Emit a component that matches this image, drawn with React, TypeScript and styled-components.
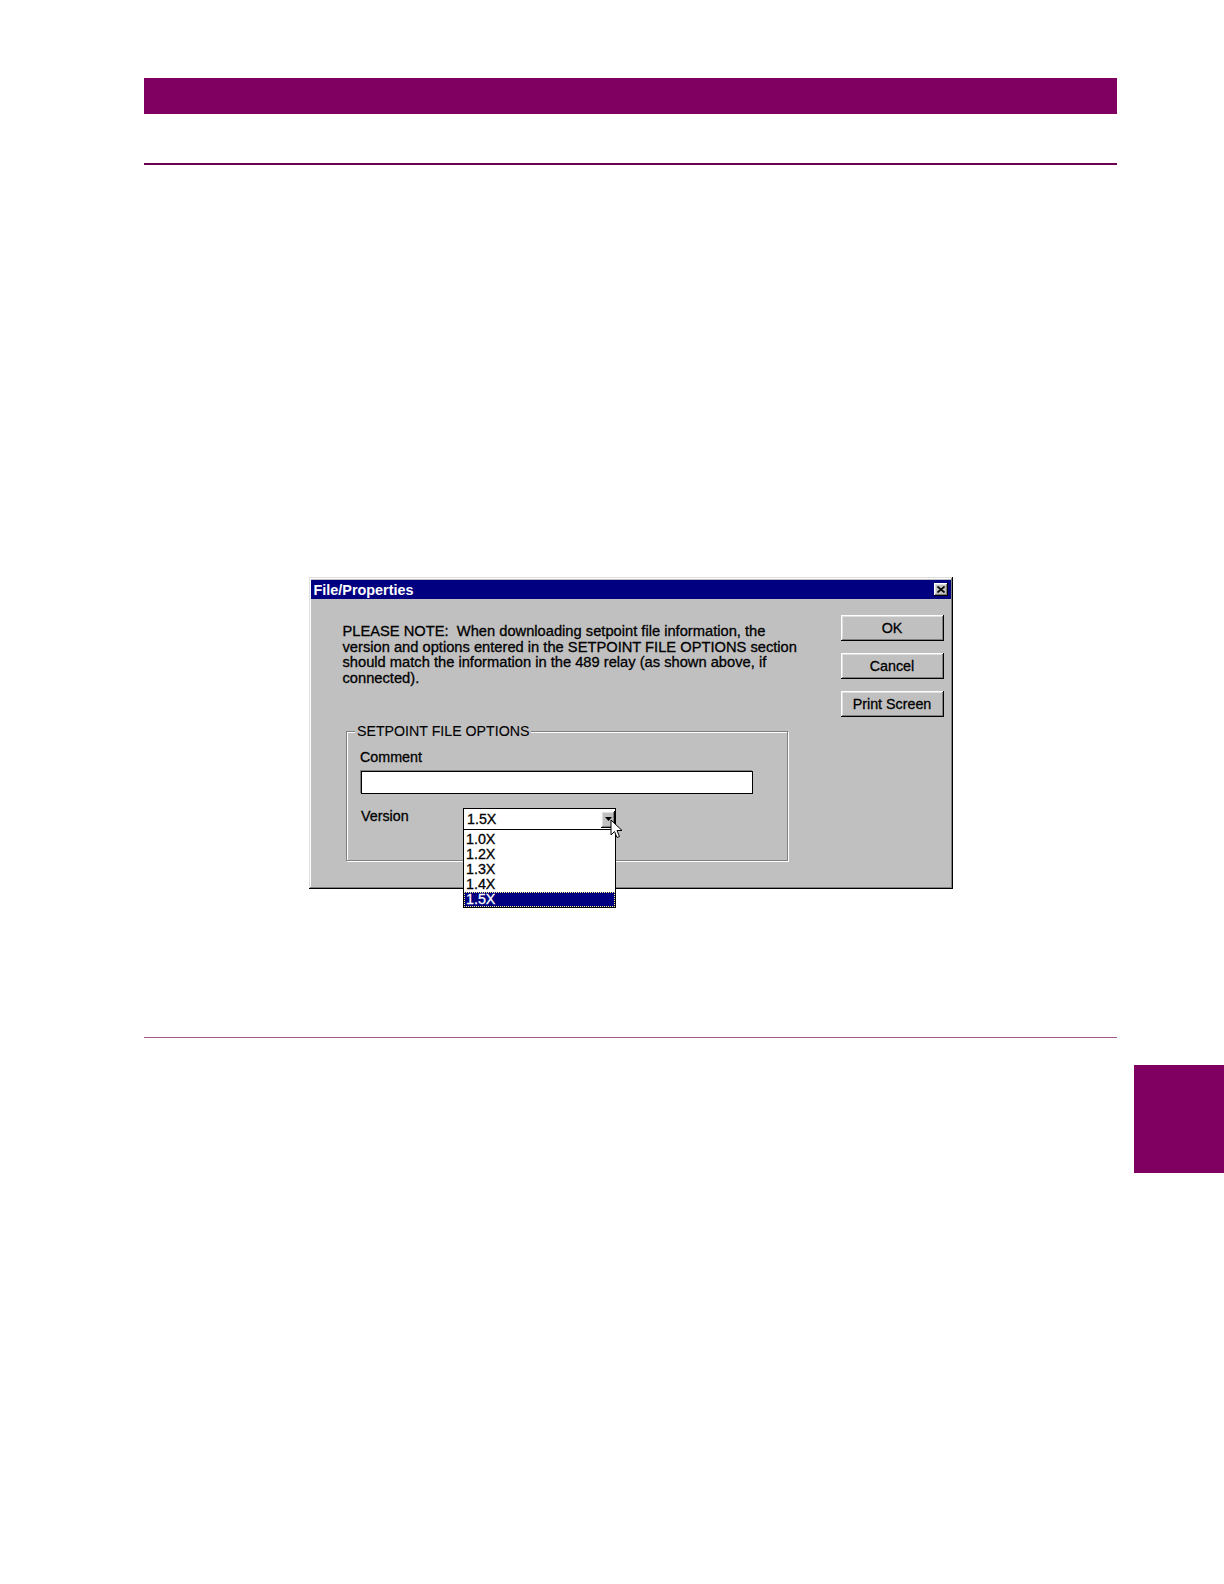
import React from "react";
import styled, { createGlobalStyle } from "styled-components";

const PURPLE = "#800062";
const FONT = `"Liberation Sans", Arial, sans-serif`;

const Global = createGlobalStyle`
  html, body { margin: 0; padding: 0; background: #ffffff; }
  body { font-family: ${FONT}; }
`;

const Page = styled.div`
  width: 1224px;
  min-height: 1584px;
  padding-top: 78px;
  box-sizing: border-box;
  display: flex;
  flex-direction: column;
  background: #fff;
`;

const Content = styled.div`
  margin: 0 107px 0 144px;
  display: flex;
  flex-direction: column;
`;

const HeaderBar = styled.div`
  height: 36px;
  background: ${PURPLE};
`;

const Rule = styled.div<{ $top: number; $h: number; $color: string }>`
  margin-top: ${(p) => p.$top}px;
  height: ${(p) => p.$h}px;
  background: ${(p) => p.$color};
`;

const DialogSlot = styled.div`
  margin-top: 412px;
  display: flex;
  justify-content: center;
`;

const raised = `
  box-shadow: inset -1px -1px 0 #000, inset 1px 1px 0 #ffffff,
    inset -2px -2px 0 #808080, inset 2px 2px 0 #dfdfdf;
`;

const heavy = `
  -webkit-text-stroke: 0.3px #000;
`;

const Window = styled.div`
  width: 644px;
  height: 312px;
  box-sizing: border-box;
  background: #c0c0c0;
  padding: 2px;
  box-shadow: inset -1px -1px 0 #000, inset 1px 1px 0 #dfdfdf,
    inset -2px -2px 0 #808080, inset 2px 2px 0 #fff;
  display: flex;
  flex-direction: column;
  position: relative;
  z-index: 1;
  font-family: ${FONT};
  color: #000;
`;

const TitleBar = styled.div`
  height: 19px;
  margin-top: 1px;
  background: #000080;
  display: flex;
  align-items: center;
  justify-content: space-between;
  padding: 0 3px 0 3px;
`;

const Title = styled.span`
  color: #fff;
  font-weight: bold;
  font-size: 14.4px;
  line-height: 19px;
  margin-top: 1px;
`;

const CloseBox = styled.div`
  width: 14px;
  height: 13px;
  background: #c0c0c0;
  ${raised}
  display: flex;
  align-items: center;
  justify-content: center;
`;

const Body = styled.div`
  flex: 1;
  display: flex;
  padding: 16px 7px 0 32px;
`;

const Main = styled.div`
  flex: 1;
  padding-top: 9px;
  display: flex;
  flex-direction: column;
  align-items: flex-start;
`;

const Note = styled.div`
  font-size: 14.7px;
  line-height: 15.5px;
  white-space: pre;
  ${heavy}
`;

const NoteLine = styled.span`
  display: block;
`;

const GroupBox = styled.div`
  margin: 45px 0 0 3.5px;
  width: 442px;
  box-sizing: border-box;
  border: 1px solid #808080;
  box-shadow: inset 1px 1px 0 #fff, 1px 1px 0 #fff;
  padding: 0 0 30px 14px;
  display: flex;
  flex-direction: column;
  align-items: flex-start;
`;

const Legend = styled.span`
  margin: -8.5px 0 0 -6px;
  padding: 0 2px;
  background: #c0c0c0;
  font-size: 14.2px;
  line-height: 15px;
  -webkit-text-stroke: 0.1px #000;
`;

const FieldLabel = styled.span<{ $width?: number }>`
  font-size: 14.3px;
  line-height: 15px;
  width: ${(p) => (p.$width ? `${p.$width}px` : "auto")};
  ${heavy}
`;

const CommentLabel = styled(FieldLabel)`
  margin: 11px 0 0 -1px;
`;

const TextBox = styled.div`
  margin-top: 6px;
  width: 392px;
  height: 23px;
  box-sizing: border-box;
  background: #fff;
  border: 1px solid #000;
  box-shadow: -1px -1px 0 #808080;
`;

const VersionRow = styled.div`
  margin-top: 14px;
  display: flex;
  align-items: flex-start;
`;

const VersionLabel = styled(FieldLabel)`
  margin-top: 1.5px;
`;

const Combo = styled.div`
  position: relative;
  width: 153px;
  height: 22px;
  box-sizing: border-box;
  border: 1px solid #000;
  background: #fff;
  display: flex;
  align-items: center;
  justify-content: space-between;
  padding-left: 3px;
`;

const ComboText = styled.span`
  font-size: 14.3px;
  line-height: 15px;
  margin-top: 1px;
  ${heavy}
`;

const DropButton = styled.div`
  width: 14px;
  height: 17px;
  margin: 1px 0 0 0;
  background: #c0c0c0;
  ${raised}
  display: flex;
  align-items: center;
  justify-content: center;
`;

const DropList = styled.div`
  position: absolute;
  top: 100%;
  left: -1px;
  right: -1px;
  border: 1px solid #000;
  padding-top: 2px;
  background: #fff;
  display: flex;
  flex-direction: column;
  z-index: 2;
`;

const ListItem = styled.div<{ $selected?: boolean }>`
  height: 15px;
  line-height: 15px;
  font-size: 14.3px;
  padding-left: 2px;
  background: ${(p) => (p.$selected ? "#000080" : "#fff")};
  color: ${(p) => (p.$selected ? "#fff" : "#000")};
  -webkit-text-stroke: 0.3px ${(p) => (p.$selected ? "#fff" : "#000")};
  outline: ${(p) => (p.$selected ? "1px dotted #ffff80" : "none")};
  outline-offset: -1px;
`;

const Pointer = styled.svg`
  position: absolute;
  left: 146px;
  top: 10px;
  z-index: 3;
`;

const Buttons = styled.div`
  width: 103px;
  display: flex;
  flex-direction: column;
  gap: 12px;
`;

const Btn = styled.button`
  width: 103px;
  height: 26px;
  padding: 0;
  border: 0;
  background: #c0c0c0;
  ${raised}
  font-family: ${FONT};
  font-size: 14.3px;
  color: #000;
  ${heavy}
`;

const TabRow = styled.div`
  margin-top: 27px;
  display: flex;
  justify-content: flex-end;
`;

const SideTab = styled.div`
  width: 90px;
  height: 108px;
  background: ${PURPLE};
`;

const versions = ["1.0X", "1.2X", "1.3X", "1.4X", "1.5X"];

export default function App() {
  return (
    <>
      <Global />
      <Page>
        <Content>
          <HeaderBar />
          <Rule $top={49} $h={2} $color="#6e0052" />
          <DialogSlot>
            <Window>
              <TitleBar>
                <Title>File/Properties</Title>
                <CloseBox>
                  <svg width="8" height="7" viewBox="0 0 8 7">
                    <path d="M0.5 0.5 L7.5 6.5 M7.5 0.5 L0.5 6.5" stroke="#000" strokeWidth="1.6" />
                  </svg>
                </CloseBox>
              </TitleBar>
              <Body>
                <Main>
                  <Note>
                    <NoteLine>{"PLEASE NOTE:  When downloading setpoint file information, the"}</NoteLine>
                    <NoteLine>{"version and options entered in the SETPOINT FILE OPTIONS section"}</NoteLine>
                    <NoteLine>{"should match the information in the 489 relay (as shown above, if"}</NoteLine>
                    <NoteLine>{"connected)."}</NoteLine>
                  </Note>
                  <GroupBox>
                    <Legend>SETPOINT FILE OPTIONS</Legend>
                    <CommentLabel>Comment</CommentLabel>
                    <TextBox />
                    <VersionRow>
                      <VersionLabel $width={102}>Version</VersionLabel>
                      <Combo>
                        <ComboText>1.5X</ComboText>
                        <DropButton>
                          <svg width="7" height="4" viewBox="0 0 7 4">
                            <path d="M0 0 H7 L3.5 4 Z" fill="#000" />
                          </svg>
                        </DropButton>
                        <DropList>
                          {versions.map((v) => (
                            <ListItem key={v} $selected={v === "1.5X"}>
                              {v}
                            </ListItem>
                          ))}
                        </DropList>
                        <Pointer width="13" height="20" viewBox="0 0 13 20">
                          <path
                            d="M1 1 L1 16 L4.5 12.5 L7 18.5 L9.5 17.5 L7 11.5 L12 11.5 Z"
                            fill="#fff"
                            stroke="#000"
                            strokeWidth="1"
                            strokeLinejoin="miter"
                          />
                        </Pointer>
                      </Combo>
                    </VersionRow>
                  </GroupBox>
                </Main>
                <Buttons>
                  <Btn>OK</Btn>
                  <Btn>Cancel</Btn>
                  <Btn>Print Screen</Btn>
                </Buttons>
              </Body>
            </Window>
          </DialogSlot>
          <Rule $top={148} $h={1} $color="#a0588e" />
        </Content>
        <TabRow>
          <SideTab />
        </TabRow>
      </Page>
    </>
  );
}
